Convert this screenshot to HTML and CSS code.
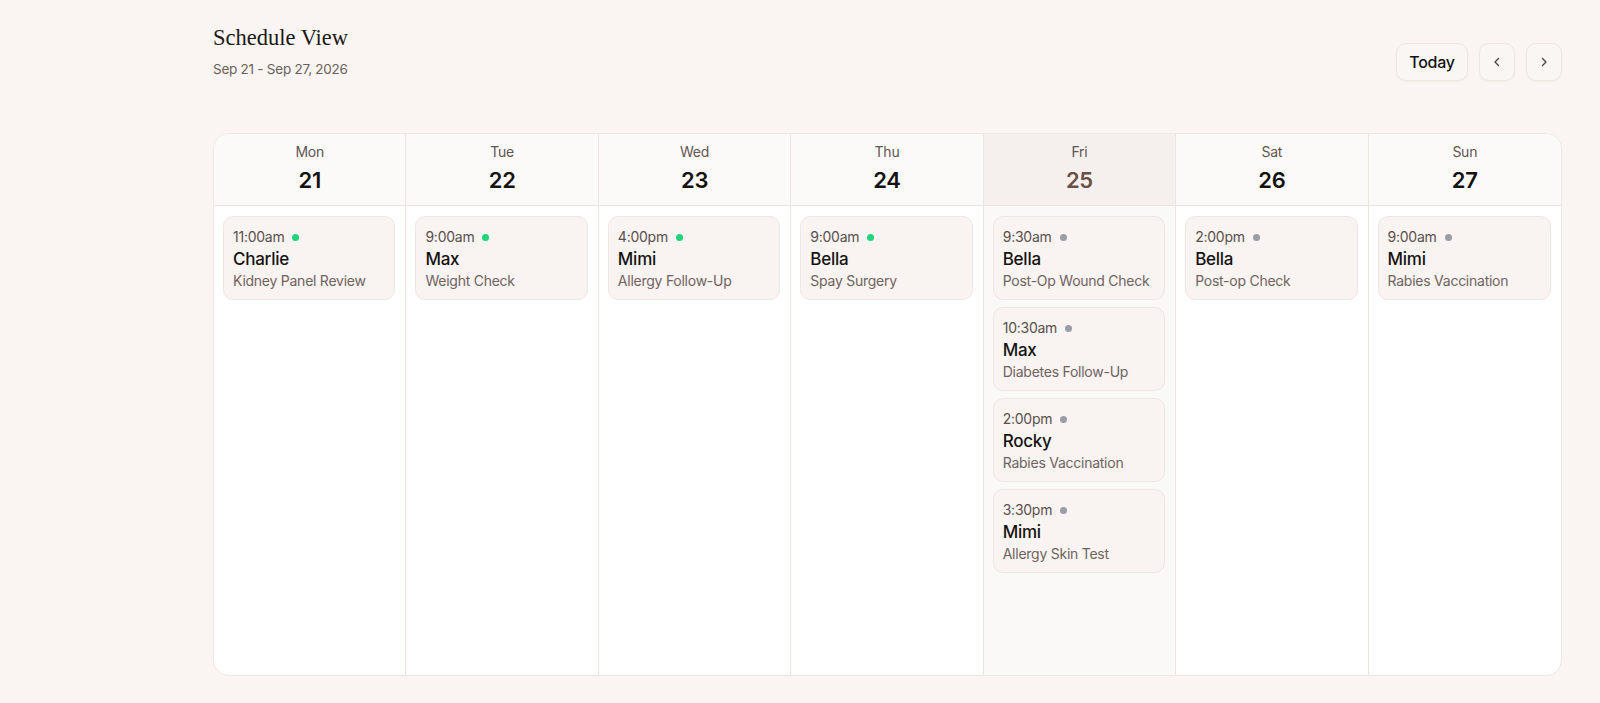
FILE: index.html
```html
<!DOCTYPE html>
<html lang="en">
<head>
  <meta charset="UTF-8">
  <title>Schedule View</title>
  <link rel="stylesheet" href="styles.css">
</head>
<body>
  <main class="page">
    <header class="page-head">
      <div class="title-block">
        <h1>Schedule View</h1>
        <p class="range">Sep 21 - Sep 27, 2026</p>
      </div>
      <div class="actions">
        <button class="btn btn-today">Today</button>
        <button class="btn btn-icon" aria-label="Previous week">
          <svg width="16" height="16" viewBox="0 0 16 16" fill="none" stroke="currentColor" stroke-width="1.4" stroke-linecap="round" stroke-linejoin="round"><path d="M9.5 4.5 6 8l3.5 3.5"/></svg>
        </button>
        <button class="btn btn-icon" aria-label="Next week">
          <svg width="16" height="16" viewBox="0 0 16 16" fill="none" stroke="currentColor" stroke-width="1.4" stroke-linecap="round" stroke-linejoin="round"><path d="M6.5 4.5 10 8l-3.5 3.5"/></svg>
        </button>
      </div>
    </header>

    <section class="week">
      <div class="day">
        <div class="day-head"><span class="dow">Mon</span><span class="num">21</span></div>
        <div class="day-body">
          <div class="appt"><div class="time">11:00am <i class="dot done"></i></div><div class="pet">Charlie</div><div class="reason">Kidney Panel Review</div></div>
        </div>
      </div>
      <div class="day">
        <div class="day-head"><span class="dow">Tue</span><span class="num">22</span></div>
        <div class="day-body">
          <div class="appt"><div class="time">9:00am <i class="dot done"></i></div><div class="pet">Max</div><div class="reason">Weight Check</div></div>
        </div>
      </div>
      <div class="day">
        <div class="day-head"><span class="dow">Wed</span><span class="num">23</span></div>
        <div class="day-body">
          <div class="appt"><div class="time">4:00pm <i class="dot done"></i></div><div class="pet">Mimi</div><div class="reason">Allergy Follow-Up</div></div>
        </div>
      </div>
      <div class="day">
        <div class="day-head"><span class="dow">Thu</span><span class="num">24</span></div>
        <div class="day-body">
          <div class="appt"><div class="time">9:00am <i class="dot done"></i></div><div class="pet">Bella</div><div class="reason">Spay Surgery</div></div>
        </div>
      </div>
      <div class="day today">
        <div class="day-head"><span class="dow">Fri</span><span class="num">25</span></div>
        <div class="day-body">
          <div class="appt"><div class="time">9:30am <i class="dot"></i></div><div class="pet">Bella</div><div class="reason">Post-Op Wound Check</div></div>
          <div class="appt"><div class="time">10:30am <i class="dot"></i></div><div class="pet">Max</div><div class="reason">Diabetes Follow-Up</div></div>
          <div class="appt"><div class="time">2:00pm <i class="dot"></i></div><div class="pet">Rocky</div><div class="reason">Rabies Vaccination</div></div>
          <div class="appt"><div class="time">3:30pm <i class="dot"></i></div><div class="pet">Mimi</div><div class="reason">Allergy Skin Test</div></div>
        </div>
      </div>
      <div class="day">
        <div class="day-head"><span class="dow">Sat</span><span class="num">26</span></div>
        <div class="day-body">
          <div class="appt"><div class="time">2:00pm <i class="dot"></i></div><div class="pet">Bella</div><div class="reason">Post-op Check</div></div>
        </div>
      </div>
      <div class="day">
        <div class="day-head"><span class="dow">Sun</span><span class="num">27</span></div>
        <div class="day-body">
          <div class="appt"><div class="time">9:00am <i class="dot"></i></div><div class="pet">Mimi</div><div class="reason">Rabies Vaccination</div></div>
        </div>
      </div>
    </section>
  </main>
</body>
</html>
```

FILE: styles.css
```css
* { box-sizing: border-box; }
body {
  margin: 0;
  background: #faf5f2;
  font-family: Inter, "Noto Sans", sans-serif;
  color: #1a1716;
  letter-spacing: -0.25px;
}
.page { padding: 24px 38px 27px 213px; }

.page-head { display: flex; justify-content: space-between; align-items: flex-start; }
h1 {
  margin: 0;
  font-family: "Liberation Serif", serif;
  font-weight: 400;
  font-size: 22.5px;
  line-height: 28px;
  letter-spacing: 0;
  color: #1c1917;
}
.range { margin: 7px 0 0; font-size: 13.5px; line-height: 20px; color: #6b5f5b; }

.actions { display: flex; gap: 11px; margin-top: 19px; }
.btn {
  height: 38px;
  border: 1px solid #efe6e1;
  border-radius: 10px;
  background: #faf6f3;
  font-family: inherit;
  cursor: pointer;
  box-shadow: 0 1px 2px rgba(80, 50, 40, 0.04);
}
.btn-today { width: 72px; font-size: 16px; font-weight: 500; letter-spacing: -0.3px; color: #141211; }
.btn-icon { width: 36px; display: flex; align-items: center; justify-content: center; color: #4f4643; padding: 0; }

.week {
  margin-top: 52px;
  display: grid;
  grid-template-columns: repeat(7, 1fr);
  height: 543px;
  background: #fff;
  border: 1px solid #f1e7e2;
  border-radius: 16px;
  overflow: hidden;
}
.day { display: flex; flex-direction: column; border-right: 1px solid #efe5e0; }
.day:last-child { border-right: none; }
.day-head {
  display: flex;
  flex-direction: column;
  align-items: center;
  gap: 4px;
  padding: 8px 0 11px;
  background: #fcfaf9;
  border-bottom: 1px solid #efe5e0;
}
.dow { font-size: 14px; line-height: 20px; color: #5f5551; }
.num { font-size: 22px; line-height: 28px; font-weight: 600; color: #141211; }

.day-body { flex: 1; display: flex; flex-direction: column; gap: 7px; padding: 10px 10px 10px 9px; }

.today .day-head { background: #f5f0ed; }
.today .day-body { background: #fbf9f8; }
.today .num { color: #6b5045; }

.appt {
  padding: 10px 9px 8px;
  border: 1px solid #f0e6e1;
  border-radius: 10px;
  background: #f9f3f1;
}
.time { font-size: 14px; line-height: 20px; color: #5a504c; display: flex; align-items: center; gap: 8px; }
.dot { width: 7px; height: 7px; border-radius: 50%; background: #9c9ca6; }
.dot.done { background: #1fd47a; }
.pet { font-size: 17px; line-height: 24px; font-weight: 500; color: #141211; }
.reason { font-size: 14px; line-height: 20px; color: #6f6460; }
```
